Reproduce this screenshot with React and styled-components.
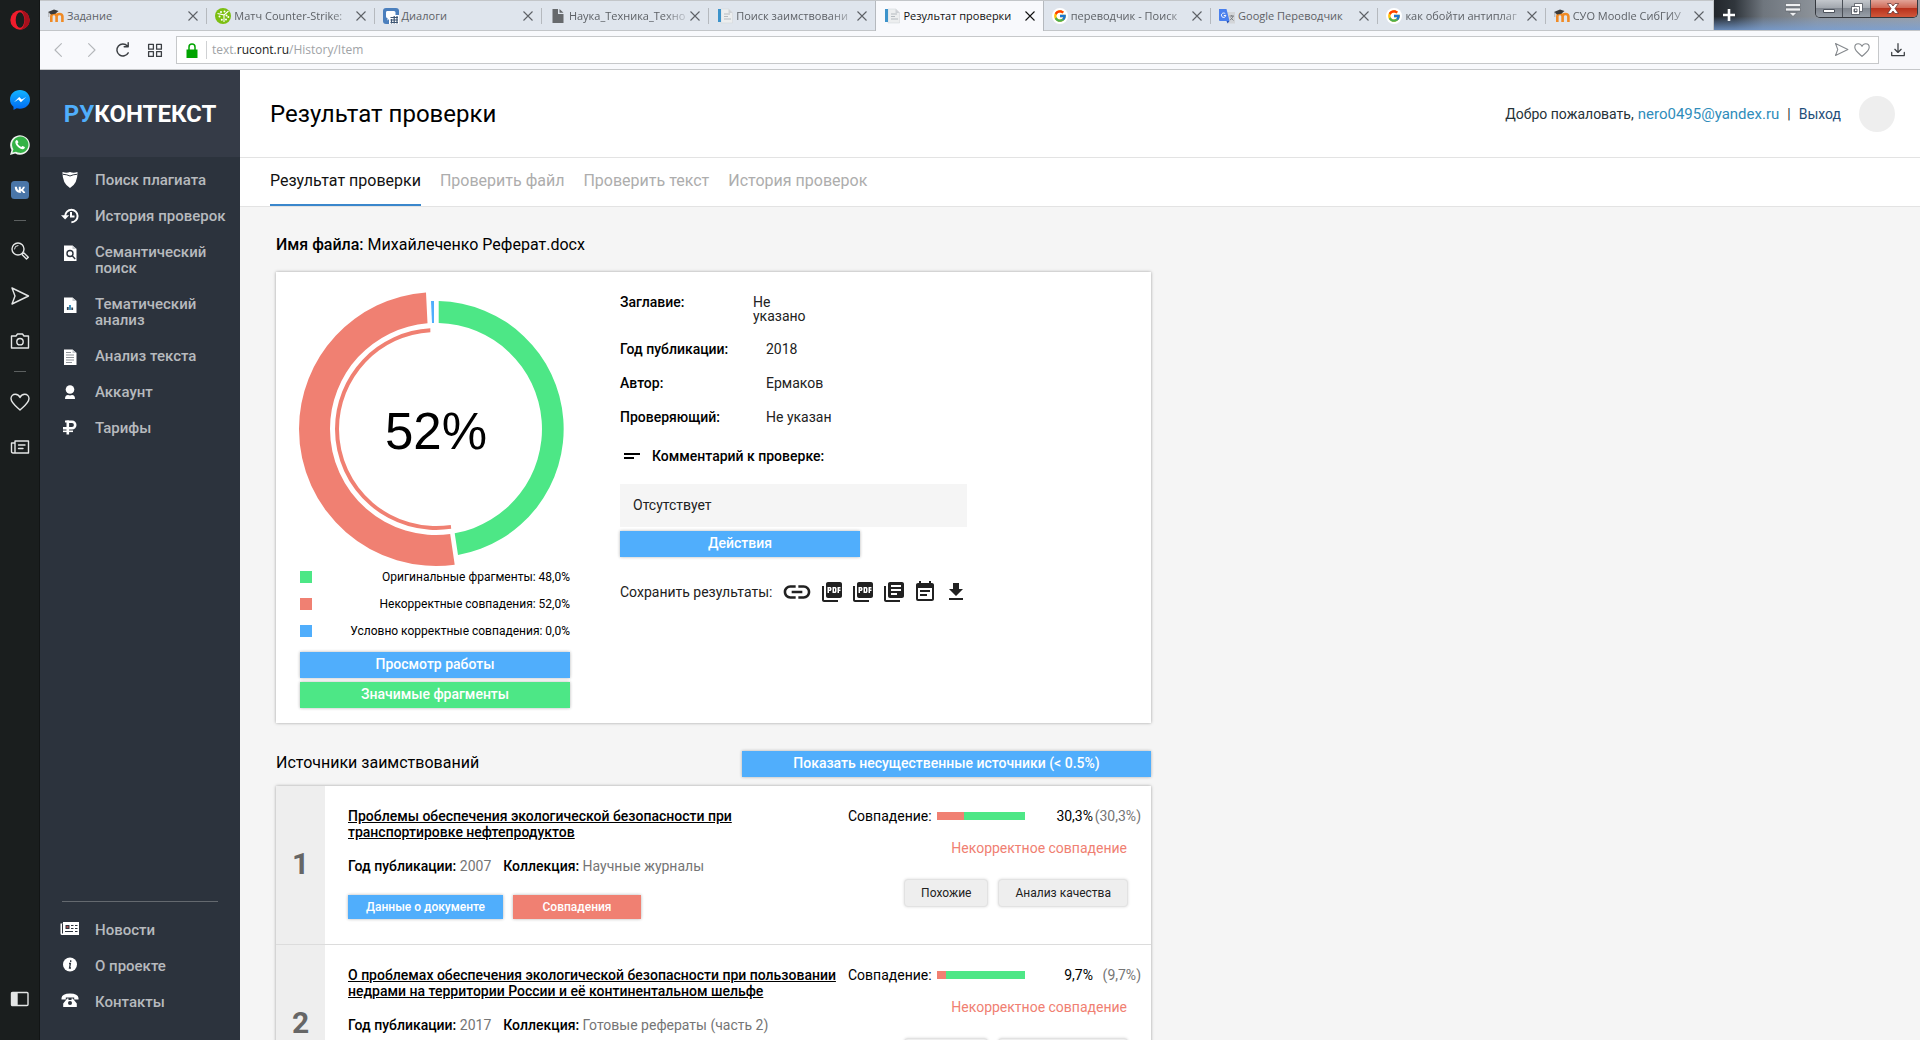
import React from 'react'
import styled, { createGlobalStyle } from 'styled-components'
import {
  MdLink,
  MdPictureAsPdf,
  MdLibraryBooks,
  MdEventNote,
  MdFileDownload,
  MdShortText
} from 'react-icons/md'
import { FcGoogle } from 'react-icons/fc'

const colors = {
  blue: `#50aefc`,
  green: `#4de786`,
  red: `#f08072`,
  grey: `#eeeeee`
}

const GlobalStyle = createGlobalStyle`
  * {
    box-sizing: border-box;
  }

  body {
    margin: 0;
    background: #f5f5f5;
    color: #000;
    font-family: Roboto, "Liberation Sans", sans-serif;
    font-size: 14px;
    line-height: 16px;
  }

  button,
  input {
    font-family: inherit;
  }

  a {
    color: inherit;
    text-decoration: none;
  }

  svg {
    display: block;
    flex: none;
  }
`

const Shell = styled.div`
  display: flex;
  height: 100vh;
  overflow: hidden;
`

const OperaBar = styled.aside`
  flex: none;
  width: 40px;
  padding: 9px 0 28px;
  display: flex;
  flex-direction: column;
  align-items: center;
  background: #1a1e1e;
  border-right: 1px solid #121515;
`

const OperaButton = styled.button`
  width: 39px;
  height: ${props => props.$height || 45}px;
  margin-bottom: ${props => props.$logo ? 46 : 0}px;
  padding: 0;
  border: 0;
  display: flex;
  align-items: center;
  justify-content: center;
  background: none;
  color: #e4e6e6;
`

const OperaDivider = styled.div`
  width: 12px;
  height: 1px;
  margin: 8px 0 7px;
  background: #5c6060;
`

const Spacer = styled.div`
  flex: 1;
`

const Browser = styled.div`
  flex: 1;
  min-width: 0;
  display: flex;
  flex-direction: column;
`

const TabStrip = styled.div`
  flex: none;
  height: 31px;
  display: flex;
  font-family: "Open Sans", "Noto Sans", sans-serif;
  font-size: 11px;
`

const TabList = styled.div`
  flex: 1;
  min-width: 0;
  display: flex;
  background: #dfe5ed;
  border-top: 1px solid #c3c6c9;
  border-right: 1px solid #c3c6c9;
`

const BrowserTab = styled.div`
  flex: 1 1 0;
  min-width: 0;
  display: flex;
  align-items: center;
  gap: 3px;
  padding: 0 9px 0 8px;
  background: ${props => props.$active ? `#f8f9fc` : `transparent`};
  border-bottom: 1px solid ${props => props.$active ? `#f8f9fc` : `#c3c6c9`};
  color: ${props => props.$active ? `#111` : `#5d6166`};
`

const TabDivider = styled.div`
  align-self: center;
  width: 1px;
  height: ${props => props.$edge ? 30 : 16}px;
  margin-left: -1px;
  background: #b5b9be;
`

const TabTitle = styled.span`
  flex: 1;
  min-width: 0;
  white-space: nowrap;
  mask-image: ${props => props.$fade ? `linear-gradient(to right, #000 80%, rgba(0, 0, 0, 0.2))` : `none`};
`

const PlainButton = styled.button`
  padding: 0;
  border: 0;
  display: flex;
  background: none;
  color: inherit;
`

const WindowArea = styled.div`
  flex: none;
  width: 206px;
  padding: 0 2px 0 9px;
  display: flex;
  align-items: flex-start;
  background: linear-gradient(to bottom, transparent 55%, rgba(120, 160, 215, 0.8)),
    linear-gradient(to right, #23272c 0, #30363c 10%, #6f767e 24%, #8e949b 50%, #9a9fa6 100%);
  border-bottom: 1px solid #c3c6c9;
`

const NewTab = styled(PlainButton)`
  margin: 9px 50px 0 0;
  color: #fff;
`

const TabMenu = styled(PlainButton)`
  margin: 3px 14px 0 0;
`

const WindowControls = styled.div`
  display: flex;
  height: 18px;
  border: 1px solid #34383e;
  border-top: 0;
  border-radius: 0 0 5px 5px;
  overflow: hidden;
`

const WindowButton = styled.button`
  width: ${props => props.$close ? 47 : 28}px;
  padding: 0;
  border: 0;
  border-right: 1px solid ${props => props.$close ? `transparent` : `#4a4f57`};
  display: flex;
  align-items: center;
  justify-content: center;
  background: ${props => props.$close
    ? `linear-gradient(to bottom, #e2a498, #cf6a57 45%, #b8321c 50%, #d0573a)`
    : `linear-gradient(to bottom, #c3c7cc, #a3a8af 45%, #7f858e 50%, #989fa8)`};
`

const AddressRow = styled.div`
  flex: none;
  height: 39px;
  padding: 0 15px 0 11px;
  display: flex;
  align-items: center;
  background: #f8f9fc;
  border-bottom: 1px solid #c6c8ca;
  color: #3b3f43;
`

const NavButtons = styled.div`
  width: 125px;
  display: flex;
  align-items: center;
  gap: 16px;
`

const AddressBox = styled.div`
  flex: 1;
  height: 28px;
  margin-right: 12px;
  padding: 0 8px 0 9px;
  display: flex;
  align-items: center;
  background: #fff;
  border: 1px solid #c6c8ca;
  color: #a0a3a6;
  font: 12px "Open Sans", "Noto Sans", sans-serif;
`

const AddressText = styled.span`
  flex: 1;
  margin-left: 8px;
  padding-left: 5px;
  border-left: 1px solid #cfd1d3;
  line-height: 18px;

  b {
    color: #222;
    font-weight: 400;
  }
`

const IconPair = styled.div`
  display: flex;
  gap: 5px;
  color: #85898d;
`

const Site = styled.div`
  flex: 1;
  min-height: 0;
  display: flex;
`

const SideMenu = styled.aside`
  flex: none;
  width: 200px;
  display: flex;
  flex-direction: column;
  background: #2c333d;
  color: #b7babe;
  font-size: 15px;
  font-weight: 500;
`

const Logo = styled.a`
  height: 87px;
  display: flex;
  align-items: center;
  justify-content: center;
  background: #353b47;
  color: #fff;
  font-size: 24px;
  font-weight: 700;

  span {
    color: ${colors.blue};
  }
`

const MenuList = styled.nav`
  padding: 5px 10px 0 20px;
`

const MenuItem = styled.a`
  display: flex;
  gap: 15px;
  padding: 10px 0;
`

const MenuIcon = styled.span`
  flex: none;
  width: 20px;
  height: 16px;
  display: flex;
  align-items: center;
  justify-content: center;
  color: #fff;
`

const MenuFooter = styled.nav`
  margin: auto 10px 20px 20px;

  hr {
    margin: 0 12px 10px 2px;
    border: 0;
    border-top: 1px solid #64696f;
  }
`

const Main = styled.main`
  flex: 1;
  min-width: 0;
  overflow: hidden;
`

const Header = styled.header`
  height: 88px;
  padding: 0 25px 0 30px;
  display: flex;
  align-items: center;
  justify-content: space-between;
  background: #fff;
  border-bottom: 1px solid #e3e3e3;
`

const PageTitle = styled.h1`
  margin: 0;
  font-size: 24px;
  font-weight: 400;
`

const UserLine = styled.div`
  display: flex;
  align-items: center;
  gap: 4px;
  color: #263238;
`

const UserMail = styled.a`
  margin-right: 4px;
  color: #2f8dbb;
  font-size: 15px;
`

const Exit = styled.a`
  margin-left: 4px;
  color: #1f4e79;
`

const Avatar = styled.div`
  width: 36px;
  height: 36px;
  margin-left: 14px;
  border-radius: 50%;
  background: ${colors.grey};
`

const PageTabs = styled.nav`
  height: 49px;
  padding: 0 30px;
  display: flex;
  gap: 19px;
  background: #fff;
  border-bottom: 1px solid #e3e3e3;
`

const PageTab = styled.a`
  padding-top: 15px;
  border-bottom: 2px solid ${props => props.$active ? `#3a87cc` : `transparent`};
  color: ${props => props.$active ? `#111` : `#adadad`};
  font-size: 16px;
`

const Content = styled.div`
  max-width: 947px;
  padding: 30px 36px;
`

const FileName = styled.h2`
  margin: 0 0 19px;
  font-size: 16px;
  line-height: 16px;
  font-weight: 400;

  b {
    font-weight: 500;
  }
`

const Card = styled.section`
  background: #fff;
  box-shadow: 0 0 3px rgba(0, 0, 0, 0.35);
`

const Summary = styled(Card)`
  padding: 19px 24px 15px;
  display: flex;
  gap: 50px;
`

const ChartColumn = styled.div`
  flex: none;
  width: 270px;
  display: flex;
  flex-direction: column;
`

const Chart = styled.svg`
  overflow: visible;
  font-family: "Liberation Sans", sans-serif;
`

const Legend = styled.ul`
  margin: 0 0 15px;
  padding: 0;
  display: grid;
  gap: 15px;
  list-style: none;
`

const LegendItem = styled.li`
  display: flex;
  justify-content: space-between;
  align-items: center;
  height: 12px;
  font-size: 12px;

  &::before {
    content: "";
    width: 12px;
    height: 12px;
    background: ${props => props.$color};
  }
`

const ActionButton = styled.button`
  width: ${props => props.$width || `100%`};
  height: ${props => props.$small ? 24 : 26}px;
  padding: ${props => props.$small ? 0 : `0 0 2px`};
  border: 0;
  background: ${props => props.$color || colors.blue};
  box-shadow: 0 0 3px rgba(0, 0, 0, 0.3);
  color: #fff;
  font-size: ${props => props.$small ? 12 : 14}px;
  font-weight: 500;
  line-height: 16px;
`

const ButtonStack = styled.div`
  display: grid;
  gap: 4px;
`

const Details = styled.div`
  width: 347px;
  padding-top: 4px;
`

const Fields = styled.dl`
  margin: 0 0 19px;
  display: grid;
  gap: 18px;
`

const Field = styled.div`
  display: grid;
  grid-template-columns: ${props => props.$narrow ? `133px 70px` : `146px 1fr`};
  line-height: ${props => props.$narrow ? 14 : 16}px;

  dt {
    font-weight: 500;
  }

  dd {
    margin: 0;
    color: #222;
  }
`

const CommentTitle = styled.h3`
  margin: 0 0 16px;
  display: flex;
  align-items: center;
  gap: 8px;
  font-size: 14px;
  font-weight: 500;
`

const Comment = styled.p`
  margin: 0 0 4px;
  padding: 13px 13px 14px;
  background: #f5f5f5;
  color: #222;
`

const SaveRow = styled.div`
  margin-top: 19px;
  display: flex;
  align-items: center;
  gap: 7px;
  white-space: nowrap;
  color: #212121;
`

const SaveLabel = styled.span`
  margin-right: 2px;
`

const SourcesHead = styled.div`
  margin: 28px 0 9px;
  display: flex;
  align-items: center;
  justify-content: space-between;

  h2 {
    margin: 0 0 2px;
    font-size: 16px;
    font-weight: 400;
  }
`

const Source = styled.article`
  height: 159px;
  display: flex;
  border-bottom: 1px solid #dcdcdc;
`

const SourceNumber = styled.div`
  flex: none;
  width: 49px;
  padding-bottom: 3px;
  display: flex;
  align-items: center;
  justify-content: center;
  background: ${colors.grey};
  color: #666;
  font-size: 30px;
  font-weight: 700;
`

const SourceInfo = styled.div`
  flex: 1;
  min-width: 0;
  padding: 22px 0 0 23px;
`

const SourceTitle = styled.a`
  display: block;
  margin-bottom: 18px;
  font-weight: 500;
  text-decoration: underline;
`

const Meta = styled.p`
  margin: 0 0 21px;
  display: flex;
  gap: 12px;
  color: #757575;

  b {
    color: #000;
    font-weight: 500;
  }
`

const ButtonRow = styled.div`
  display: flex;
  gap: 10px;
`

const Match = styled.div`
  flex: none;
  width: 303px;
  padding: 22px 10px 0 0;
`

const MatchLine = styled.div`
  display: grid;
  grid-template-columns: 89px 88px 68px 48px;
  align-items: center;
  text-align: right;

  span:first-child {
    text-align: left;
  }

  span:last-child {
    color: #757575;
  }
`

const MatchBar = styled.div`
  height: 8px;
  background: ${colors.green};

  div {
    height: 100%;
    background: ${colors.red};
  }
`

const Verdict = styled.p`
  margin: 16px 14px 23px 0;
  color: ${colors.red};
  text-align: right;
`

const MatchButtons = styled(ButtonRow)`
  justify-content: flex-end;
  margin-right: 13px;
`

const GreyButton = styled.button`
  height: 28px;
  padding: 0 16px;
  border: 1px solid #e2e2e2;
  border-radius: 4px;
  background: ${colors.grey};
  box-shadow: 0 0 3px rgba(0, 0, 0, 0.15);
  color: #222;
  font-size: 12px;
`

const Line = ({ size = 20, width = 1.4, children, viewBox = `0 0 20 20` }) =>
  <svg width={size} height={size} viewBox={viewBox} fill="none" stroke="currentColor" strokeWidth={width} strokeLinejoin="round" strokeLinecap="round">
    {children}
  </svg>

const heart = `M10 18C6.500 14.800 1 11 1 6.600 1 4 2.900 2.200 5.300 2.200c2.100 0 3.900 1.300 4.700 3.300.8-2 2.600-3.300 4.700-3.300C17.100 2.200 19 4 19 6.600c0 4.400-5.500 8.200-9 11.400z`

const Cross = () =>
  <svg width="10" height="10" viewBox="0 0 10 10" stroke="currentColor" strokeWidth="1.1">
    <path d="M.5.5l9 9M9.5.5l-9 9" />
  </svg>

const MoodleIcon = () =>
  <svg width="16" height="16" viewBox="0 0 16 16">
    <path d="M3.300 14V8.500q0-2.500 2.600-2.500T8.600 8.500V14M8.600 8.500q0-2.500 2.900-2.500T14.400 8.500V14" fill="none" stroke="#f08a24" strokeWidth="2.600" />
    <path d="M0 4l6-2.500 4.500 1.500-3.200 2.800-4.300.7z" fill="#3a3a3a" />
    <path d="M.8 4v5" stroke="#999" strokeWidth=".7" />
  </svg>

const DiceIcon = () =>
  <svg width="16" height="16" viewBox="0 0 16 16">
    <circle cx="8" cy="8" r="8" fill="#7cbf12" />
    <path d="M2.500 5.500l6.500 1.500v7M9 7l4.500-4" fill="none" stroke="#fff" strokeWidth="1.100" />
    <g fill="#fff">
      <circle cx="4.500" cy="8.500" r="1" />
      <circle cx="6.800" cy="11.700" r="1" />
      <circle cx="6" cy="4" r="1" />
      <circle cx="9.500" cy="3.500" r="1" />
      <circle cx="11.500" cy="7.500" r="1" />
      <circle cx="13.300" cy="9" r="1" />
      <circle cx="11" cy="11.500" r="1" />
    </g>
  </svg>

const DialogIcon = () =>
  <svg width="16" height="16" viewBox="0 0 16 16">
    <rect width="16" height="16" rx="3" fill="#4b7fbd" />
    <path d="M4 3h7q1.500 0 1.500 1.500v4Q12.500 10 11 10H7l-2.500 2.500V10Q3 10 3 8.500v-4Q3 3 4 3z" fill="#fff" />
    <path d="M6 7h10v9H6z" fill="#fff" />
    <path d="M7.500 9.500h7.500M7.500 12h7.500M7.500 14.500h7.500M8.500 11v4.500M11.200 8v7.500M14 8v7.500" stroke="#3d5573" strokeWidth="1.200" />
  </svg>

const PageIcon = () =>
  <svg width="16" height="16" viewBox="0 0 16 16">
    <path d="M2.500 1H8v5h5.500v9h-11zM9.500 1l4 3.700h-4z" fill="#66696c" />
  </svg>

const RucontIcon = () =>
  <svg width="16" height="16" viewBox="0 0 16 16">
    <path d="M4 1h8l3.500 3.500V15H4z" fill="#eceeef" stroke="#d5d8db" strokeWidth=".6" />
    <path d="M1 1h3v13H1z" fill="#3c93cb" />
    <path d="M7 6h6M7 8.500h4M7 11h7" stroke="#b4babf" />
    <path d="M11.500 1v4h4z" fill="#cdd1d5" />
  </svg>

const TranslateIcon = () =>
  <svg width="16" height="16" viewBox="0 0 16 16">
    <path d="M6 4h10v11.500H9z" fill="#d3d5d8" />
    <path d="M0 1h7.500l3 12H1q-1 0-1-1z" fill="#4a80ee" />
    <path d="M7.500 13h3l-2 2.500z" fill="#2552b8" />
    <path d="M6.300 5.800A2.200 2.200 0 1 0 6.800 7.500H4.800" fill="none" stroke="#fff" />
    <path d="M10.500 8h4.500M12.700 7v1.500M14.200 8q-1 3-3.200 4M11.500 9.500l3 3" stroke="#6c7075" strokeWidth=".8" fill="none" />
  </svg>

const GoogleIcon = () =>
  <svg width="16" height="16" viewBox="0 0 16 16">
    <circle cx="8" cy="8" r="8" fill="#fff" />
    <FcGoogle x="1" y="1" size={14} />
  </svg>

const OperaLogo = () =>
  <svg width="20" height="20" viewBox="0 0 20 20">
    <circle cx="10" cy="10" r="9.700" fill="#f01c2c" />
    <path d="M10 .3a9.700 9.700 0 0 1 0 19.400c3-1 4.600-4.900 4.600-9.700S13 1.300 10 .3z" fill="#a5101c" />
    <ellipse cx="10" cy="10" rx="4.300" ry="7.800" fill="#1a1e1e" />
  </svg>

const MessengerIcon = () =>
  <svg width="20" height="20" viewBox="0 0 20 20">
    <defs>
      <linearGradient id="messenger" x1="0" y1="0" x2="0" y2="1">
        <stop offset="0" stopColor="#12b4ff" />
        <stop offset="1" stopColor="#0068f2" />
      </linearGradient>
    </defs>
    <path d="M10 0C4.400 0 0 4.100 0 9.400c0 3 1.300 5.600 3.500 7.300V20l3.200-1.800c1 .3 2.200.5 3.300.5 5.600 0 10-4.100 10-9.300S15.600 0 10 0z" fill="url(#messenger)" />
    <path d="M4 12.200l5.200-5.300 2.600 2.600 4.300-2.600-5.200 5.300-2.500-2.600z" fill="#fff" />
  </svg>

const WhatsappIcon = () =>
  <svg width="20" height="20" viewBox="0 0 20 20">
    <path d="M0 20l1.500-5A9.800 9.800 0 1 1 5.200 18.600z" fill="#eef3ee" />
    <path d="M2.400 17.600l1-3.400a8.200 8.200 0 1 1 2.600 2.500z" fill="#34b246" />
    <path d="M7.300 5.200c-.5-.9-2 .2-2 1.900 0 3.200 4.300 7.200 7.300 7.200 1.700 0 2.800-1.500 2.100-2.200l-2-1.200c-.8-.2-.9 1.100-1.600 1-1.200-.3-3.200-2.200-3.500-3.300 0-.7 1-.8.800-1.500z" fill="#fff" />
  </svg>

const VkIcon = () =>
  <svg width="18" height="18" viewBox="0 0 18 18">
    <rect width="18" height="18" rx="3.500" fill="#4a76a8" />
    <path d="M3 6h2.100c.2 2 1.100 3.400 1.900 3.800V6h2v2.500c.9-.2 1.700-1.200 2.100-2.500h2c-.3 1.500-1.200 2.600-2 3.200.9.5 1.900 1.400 2.400 3h-2.200c-.4-1-1.200-1.800-2.300-2v2H8.700C5.300 12.200 3.100 10 3 6z" fill="#fff" transform="translate(.8 -.2)" />
  </svg>

const ShieldIcon = () =>
  <svg width="18" height="18" viewBox="0 0 18 18" fill="currentColor">
    <path d="M1.500 1q4 1.300 7.500 0 3.500 1.300 7.500 0 .3 11.500-7.500 16Q1.200 12.500 1.500 1z" />
    <path d="M2 3.300q4 .2 7 1.700 3-1.500 7-1.700" fill="none" stroke="#2c333d" />
  </svg>

const HistoryIcon = () =>
  <svg width="18" height="18" viewBox="0 0 18 18" fill="none" stroke="currentColor" strokeWidth="2">
    <path d="M4.200 9A6.200 6.200 0 1 1 10.400 15.200" />
    <path d="M10 5v4.500h3.500" />
    <path d="M0 8.200h8.200L4.100 12.500z" fill="currentColor" stroke="none" />
  </svg>

const DocIcon = ({ kind }) =>
  <svg width="18" height="18" viewBox="0 0 18 18">
    <path d="M3 2.500h8.500L15.500 6v12H3z" fill="#fff" />
    <path d="M11.500 2.500V6h4z" fill="#c4c8cc" />
    {kind === `search` && <g fill="none" stroke="#2c333d" strokeWidth="1.400"><circle cx="9" cy="10.500" r="3" /><path d="M11.200 12.800l3 3.200" /></g>}
    {kind === `chart` && <g strokeWidth="1.800"><path d="M6.800 15v-3M11.200 15v-2.500" stroke="#345" /><path d="M9 15v-5" stroke="#2a87b8" /></g>}
    {kind === `text` && <path d="M5 5.500h5M5 8h8M5 10.500h8M5 13h8M5 15.500h6" stroke="#8f9499" />}
  </svg>

const UserIcon = () =>
  <svg width="18" height="18" viewBox="0 0 18 18" fill="currentColor">
    <circle cx="9" cy="6.500" r="4.300" />
    <path d="M4 16q0-4 3-4 2 .9 4 0 3 0 3 4z" />
  </svg>

const RubleIcon = () =>
  <svg width="18" height="18" viewBox="0 0 18 18" fill="none" stroke="currentColor">
    <path d="M6.800 15.500V2.800H11a3.200 3.200 0 0 1 0 6.400H2" strokeWidth="2.600" />
    <path d="M2 12.300h10" strokeWidth="1.600" />
    <path d="M4 2.500h4" strokeWidth="2" />
  </svg>

const NewsIcon = () =>
  <svg width="20" height="16" viewBox="0 0 20 16">
    <path d="M3 0h16v13H2q-1.500 0-1.500-1.500V1.500H3z" fill="#fff" />
    <path d="M2.500 1.500v10" stroke="#2c333d" />
    <path d="M5.500 3h4v4h-4z" fill="#2c333d" />
    <path d="M11 3.500h2.500M11 6.500h2.500M5 9.500h8M15 3.500h2.500M15 6.500h2.500M15 9.500h2.500" stroke="#2c333d" />
    <path d="M6.500 4h2v2h-2z" fill="#a55" />
  </svg>

const InfoIcon = () =>
  <svg width="18" height="18" viewBox="0 0 18 18">
    <circle cx="9" cy="7.500" r="7" fill="#fff" />
    <path d="M9.700 3.300v1.600M8 6.500h1.400l-.9 4.500h1.500" fill="none" stroke="#2c333d" strokeWidth="1.300" />
  </svg>

const PhoneIcon = () =>
  <svg width="18" height="18" viewBox="0 0 18 18">
    <path d="M.5 5Q1 .5 9 .5T17.500 5v1.500h-4.300V4.500H4.800v2H.5z" fill="#fff" />
    <path d="M6.200 5.500h1.300V7h3V5.500h1.300l4 5V14H2.200v-3.500z" fill="#fff" />
    <circle cx="9" cy="10" r="2" fill="#2c333d" />
  </svg>

const browserTabs = [
  { title: `Задание`, icon: MoodleIcon },
  { title: `Матч Counter-Strike:`, icon: DiceIcon, long: true },
  { title: `Диалоги`, icon: DialogIcon },
  { title: `Наука_Техника_Техно`, icon: PageIcon, long: true },
  { title: `Поиск заимствовани`, icon: RucontIcon, long: true },
  { title: `Результат проверки`, icon: RucontIcon, active: true },
  { title: `переводчик - Поиск`, icon: GoogleIcon, long: true },
  { title: `Google Переводчик`, icon: TranslateIcon },
  { title: `как обойти антиплаг`, icon: GoogleIcon, long: true },
  { title: `СУО Moodle СибГИУ`, icon: MoodleIcon, long: true }
]

const menuItems = [
  { title: `Поиск плагиата`, icon: <ShieldIcon /> },
  { title: `История проверок`, icon: <HistoryIcon /> },
  { title: `Семантический поиск`, icon: <DocIcon kind="search" /> },
  { title: `Тематический анализ`, icon: <DocIcon kind="chart" /> },
  { title: `Анализ текста`, icon: <DocIcon kind="text" /> },
  { title: `Аккаунт`, icon: <UserIcon /> },
  { title: `Тарифы`, icon: <RubleIcon /> }
]

const footerItems = [
  { title: `Новости`, icon: <NewsIcon /> },
  { title: `О проекте`, icon: <InfoIcon /> },
  { title: `Контакты`, icon: <PhoneIcon /> }
]

const pageTabs = [`Результат проверки`, `Проверить файл`, `Проверить текст`, `История проверок`]

const legend = [
  { title: `Оригинальные фрагменты: 48,0%`, color: colors.green },
  { title: `Некорректные совпадения: 52,0%`, color: colors.red },
  { title: `Условно корректные совпадения: 0,0%`, color: colors.blue }
]

const saveIcons = [
  { label: `Ссылка`, icon: MdLink, size: 32 },
  { label: `PDF`, icon: MdPictureAsPdf, size: 24 },
  { label: `PDF полный`, icon: MdPictureAsPdf, size: 24 },
  { label: `Библиотека`, icon: MdLibraryBooks, size: 24 },
  { label: `Отчёт`, icon: MdEventNote, size: 24 },
  { label: `Скачать`, icon: MdFileDownload, size: 24 }
]

const sources = [
  {
    title: `Проблемы обеспечения экологической безопасности при транспортировке нефтепродуктов`,
    year: `2007`,
    collection: `Научные журналы`,
    percent: `30,3%`,
    share: 30.3
  },
  {
    title: `О проблемах обеспечения экологической безопасности при пользовании недрами на территории России и её континентальном шельфе`,
    year: `2017`,
    collection: `Готовые рефераты (часть 2)`,
    percent: `9,7%`,
    share: 9.7
  }
]

const ResultChart = () =>
  <Chart width="270" height="280" viewBox="0 0 270 280" role="img">
    <path d="M138.700 10A128 128 0 0 1 158 264L154.700 242.300A106 106 0 0 0 138.700 32z" fill={colors.green} />
    <path d="M154.700 273.700A137 137 0 0 1 -1 138A137 137 0 0 1 126 1.400L127.500 32.300A106 106 0 0 0 30 138A106 106 0 0 0 150.200 243z" fill={colors.red} />
    <path d="M151.200 237.800A101 101 0 0 1 35 138A101 101 0 0 1 130.300 37.200L130.400 41.200A97 97 0 0 0 39 138A97 97 0 0 0 150.800 233.900z" fill={colors.red} />
    <path d="M131 10h3v22h-2z" fill={colors.blue} />
    <text x="136" y="158" textAnchor="middle" fontSize="51">52%</text>
  </Chart>

const MenuEntry = ({ title, icon }) =>
  <MenuItem href="#">
    <MenuIcon>{icon}</MenuIcon>
    <span>{title}</span>
  </MenuItem>

const SourceRow = ({ number, title, year, collection, percent, share }) =>
  <Source>
    <SourceNumber>{number}</SourceNumber>
    <SourceInfo>
      <SourceTitle href="#">{title}</SourceTitle>
      <Meta>
        <span><b>Год публикации:</b> {year}</span>
        <span><b>Коллекция:</b> {collection}</span>
      </Meta>
      <ButtonRow>
        <ActionButton $small $width="155px">Данные о документе</ActionButton>
        <ActionButton $small $width="128px" $color={colors.red}>Совпадения</ActionButton>
      </ButtonRow>
    </SourceInfo>
    <Match>
      <MatchLine>
        <span>Совпадение:</span>
        <MatchBar><div style={{ width: `${share}%` }} /></MatchBar>
        <span>{percent}</span>
        <span>({percent})</span>
      </MatchLine>
      <Verdict>Некорректное совпадение</Verdict>
      <MatchButtons>
        <GreyButton>Похожие</GreyButton>
        <GreyButton>Анализ качества</GreyButton>
      </MatchButtons>
    </Match>
  </Source>

const OperaSidebar = () =>
  <OperaBar>
    <OperaButton $height={22} $logo><OperaLogo /></OperaButton>
    <OperaButton><MessengerIcon /></OperaButton>
    <OperaButton><WhatsappIcon /></OperaButton>
    <OperaButton><VkIcon /></OperaButton>
    <OperaDivider />
    <OperaButton>
      <Line><circle cx="8" cy="8" r="6" /><path d="M4.500 8A3.500 3.500 0 0 1 8 4.500" strokeWidth="1" /><path d="M12.500 12.500l1.500-.5 4.300 4.300-1.800 1.800-4.300-4.300z" /></Line>
    </OperaButton>
    <OperaButton><Line><path d="M2 2l16.500 8L2 18l3-8z" /></Line></OperaButton>
    <OperaButton>
      <Line><path d="M1.500 5H6l1.500-2h5L14 5h4.500v12h-17z" /><circle cx="10" cy="10.700" r="3.200" /></Line>
    </OperaButton>
    <OperaDivider />
    <OperaButton><Line><path d={heart} /></Line></OperaButton>
    <OperaButton>
      <Line><path d="M5 4h13.500v12H3q-1.500 0-1.500-1.500V6H5zM5 4v12M8.500 8H15M8.500 11.500H13" /></Line>
    </OperaButton>
    <Spacer />
    <OperaButton $height={26}>
      <Line><rect x="1.500" y="3.500" width="16.500" height="13" rx="1" /><path d="M2 4h5v12H2z" fill="currentColor" /></Line>
    </OperaButton>
  </OperaBar>

const BrowserTop = () =>
  <>
    <TabStrip>
      <TabList>
        {
          browserTabs.map((tab, index) => {
            const TabIcon = tab.icon
            return (
              <React.Fragment key={tab.title}>
                {index > 0 && <TabDivider $edge={tab.active || browserTabs[index - 1].active} />}
                <BrowserTab $active={tab.active}>
                  <TabIcon />
                  <TabTitle $fade={tab.long}>{tab.title}</TabTitle>
                  <PlainButton aria-label="Закрыть"><Cross /></PlainButton>
                </BrowserTab>
              </React.Fragment>
            )
          })
        }
      </TabList>
      <WindowArea>
        <NewTab aria-label="Новая вкладка">
          <svg width="12" height="12" viewBox="0 0 12 12" stroke="#fff" strokeWidth="2.600"><path d="M6 0v12M0 6h12" /></svg>
        </NewTab>
        <TabMenu aria-label="Меню вкладок">
          <svg width="16" height="14" viewBox="0 0 16 14" fill="#eef0f2" stroke="#555b62" strokeWidth=".6"><path d="M.5.500h15v3H.5zM.5 5h15v3H.5zM4 9.500h8L8 13.500z" /></svg>
        </TabMenu>
        <WindowControls>
          <WindowButton aria-label="Свернуть">
            <svg width="12" height="12" viewBox="0 0 12 12"><path d="M.5 6.500h11v3H.5z" fill="#fff" stroke="#4c525b" /></svg>
          </WindowButton>
          <WindowButton aria-label="Развернуть">
            <svg width="12" height="12" viewBox="0 0 12 12" fill="#fff" stroke="#4c525b" strokeWidth=".8"><path d="M3.500.5h8v8h-8z" /><path d="M.5 3.500h8v8h-8zM3 6v3h3V6z" fillRule="evenodd" /></svg>
          </WindowButton>
          <WindowButton $close aria-label="Закрыть окно">
            <svg width="12" height="11" viewBox="0 0 12 11"><path d="M.5.500h3.500L6 3l2-2.500h3.500L8 5.500l3.500 5H8L6 8l-2 2.500H.5l3.500-5z" fill="#fff" stroke="#5a2a2a" strokeWidth=".7" /></svg>
          </WindowButton>
        </WindowControls>
      </WindowArea>
    </TabStrip>
    <AddressRow>
      <NavButtons>
        <PlainButton aria-label="Назад"><Line size={16}><path d="M13 2L5 10l8 8" stroke="#b4b7ba" /></Line></PlainButton>
        <PlainButton aria-label="Вперёд"><Line size={16}><path d="M7 2l8 8-8 8" stroke="#b4b7ba" /></Line></PlainButton>
        <PlainButton aria-label="Обновить"><Line size={16} width={1.800}><path d="M16.500 13.500A7.500 7.500 0 1 1 15.500 5M16.500 1v5h-5" /></Line></PlainButton>
        <PlainButton aria-label="Экспресс-панель"><Line size={16} width={1.600}><path d="M2 3h6v6H2zM12 3h6v6h-6zM2 12h6v6H2zM12 12h6v6h-6z" /></Line></PlainButton>
      </NavButtons>
      <AddressBox>
        <svg width="12" height="15" viewBox="0 0 12 15"><path d="M.5 6.500h11V15H.5z" fill="#00a400" /><path d="M3 7V4q0-3 3-3t3 3v3" fill="none" stroke="#00a400" strokeWidth="1.500" /></svg>
        <AddressText>text.<b>rucont.ru</b>/History/Item</AddressText>
        <IconPair>
          <Line size={15}><path d="M2 2l16.500 8L2 18l3-8z" /></Line>
          <Line size={16}><path d={heart} /></Line>
        </IconPair>
      </AddressBox>
      <PlainButton aria-label="Загрузки"><Line size={14} width={1.800}><path d="M10 1v12M5.500 9L10 13.500 14.500 9M1 13.500V18h18v-4.500" /></Line></PlainButton>
    </AddressRow>
  </>

class App extends React.Component {
  render() {
    return (
      <Shell>
        <GlobalStyle />
        <OperaSidebar />
        <Browser>
          <BrowserTop />
          <Site>
            <SideMenu>
              <Logo href="#"><span>РУ</span>КОНТЕКСТ</Logo>
              <MenuList>
                {menuItems.map(item => <MenuEntry key={item.title} {...item} />)}
              </MenuList>
              <MenuFooter>
                <hr />
                {footerItems.map(item => <MenuEntry key={item.title} {...item} />)}
              </MenuFooter>
            </SideMenu>
            <Main>
              <Header>
                <PageTitle>Результат проверки</PageTitle>
                <UserLine>
                  <span>Добро пожаловать,</span>
                  <UserMail href="#">nero0495@yandex.ru</UserMail>
                  <span>|</span>
                  <Exit href="#">Выход</Exit>
                  <Avatar />
                </UserLine>
              </Header>
              <PageTabs>
                {pageTabs.map((title, index) => <PageTab href="#" key={title} $active={index === 0}>{title}</PageTab>)}
              </PageTabs>
              <Content>
                <FileName><b>Имя файла:</b> Михайлеченко Реферат.docx</FileName>
                <Summary>
                  <ChartColumn>
                    <ResultChart />
                    <Legend>
                      {legend.map(item => <LegendItem key={item.title} $color={item.color}>{item.title}</LegendItem>)}
                    </Legend>
                    <ButtonStack>
                      <ActionButton>Просмотр работы</ActionButton>
                      <ActionButton $color={colors.green}>Значимые фрагменты</ActionButton>
                    </ButtonStack>
                  </ChartColumn>
                  <Details>
                    <Fields>
                      <Field $narrow><dt>Заглавие:</dt><dd>Не указано</dd></Field>
                      <Field><dt>Год публикации:</dt><dd>2018</dd></Field>
                      <Field><dt>Автор:</dt><dd>Ермаков</dd></Field>
                      <Field><dt>Проверяющий:</dt><dd>Не указан</dd></Field>
                    </Fields>
                    <CommentTitle><MdShortText size={24} />Комментарий к проверке:</CommentTitle>
                    <Comment>Отсутствует</Comment>
                    <ActionButton $width="240px">Действия</ActionButton>
                    <SaveRow>
                      <SaveLabel>Сохранить результаты:</SaveLabel>
                      {
                        saveIcons.map(item => {
                          const SaveIcon = item.icon
                          return <PlainButton key={item.label} aria-label={item.label}><SaveIcon size={item.size} /></PlainButton>
                        })
                      }
                    </SaveRow>
                  </Details>
                </Summary>
                <SourcesHead>
                  <h2>Источники заимствований</h2>
                  <ActionButton $width="409px">Показать несущественные источники (&lt; 0.5%)</ActionButton>
                </SourcesHead>
                <Card>
                  {sources.map((source, index) => <SourceRow key={source.title} number={index + 1} {...source} />)}
                </Card>
              </Content>
            </Main>
          </Site>
        </Browser>
      </Shell>
    )
  }
}

export default App
